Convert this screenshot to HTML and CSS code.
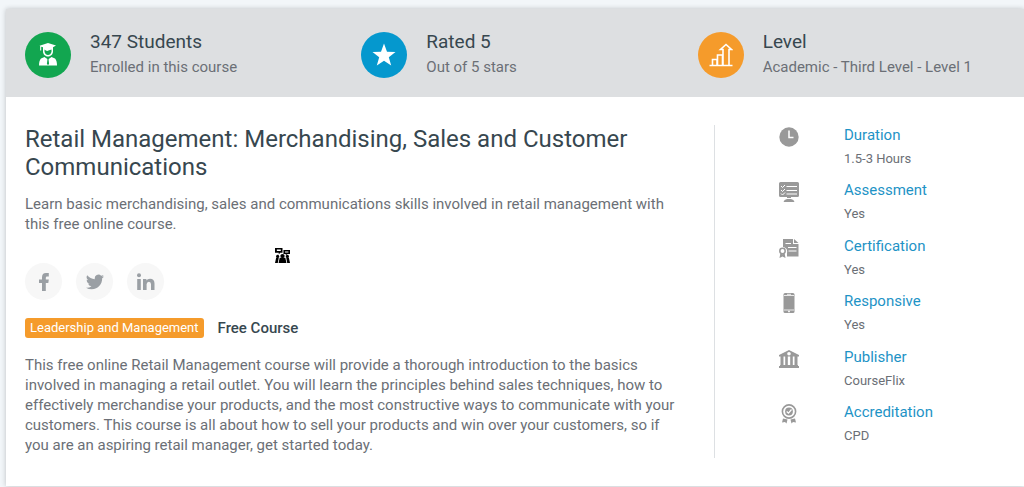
FILE: index.html
```html
<!DOCTYPE html>
<html lang="en">
<head>
<meta charset="utf-8">
<title>Retail Management: Merchandising, Sales and Customer Communications</title>
<link rel="stylesheet" href="styles.css">
</head>
<body>
<main class="card">
  <section class="stats">
    <div class="stat">
      <span class="stat-icon green">
        <svg width="22" height="24" viewBox="0 0 22 24" fill="#fff">
          <path d="M11 0 19 2.600 16 4.200V8.500C16 11 14 13.500 11 13.500S6 11 6 8.500V4.300L4.200 3.700V7.500H3.200V3.200L2.600 2.800Z"/>
          <path d="M7.500 6.500Q9.500 8.500 11.500 7.600 13 7 14.500 6.500V8.800Q13.500 12 11 12T7.500 8.800Z" fill="#12a650"/>
          <path d="M7.500 14 11 16.500 14.500 14 18 15.500Q20 17.500 20 22.500H2Q2 17.500 4 15.500Z"/>
          <path d="M10.500 16h1l.6 5-1.100 1-1.100-1Z" fill="#12a650"/>
        </svg>
      </span>
      <div>
        <h2 class="stat-title">347 Students</h2>
        <p class="stat-text">Enrolled in this course</p>
      </div>
    </div>
    <div class="stat">
      <span class="stat-icon blue">
        <svg width="24" height="24" viewBox="0 0 24 24" fill="#fff"><path d="M12 .5 15 8.700 23.500 9 16.800 14.200 19.200 22.500 12 17.700 4.800 22.500 7.200 14.200.5 9 9 8.700Z"/></svg>
      </span>
      <div>
        <h2 class="stat-title">Rated 5</h2>
        <p class="stat-text">Out of 5 stars</p>
      </div>
    </div>
    <div class="stat">
      <span class="stat-icon orange">
        <svg width="24" height="24" viewBox="0 0 24 24" fill="none" stroke="#fff" stroke-width="1.600"><path d="M.5 22.500H23.500M3.500 22V16.500H8V22M8.500 22V12H13.500V22M14 22V6.500H11.500L17 1.500 22.500 6.500H20V22"/></svg>
      </span>
      <div>
        <h2 class="stat-title">Level</h2>
        <p class="stat-text">Academic - Third Level - Level 1</p>
      </div>
    </div>
  </section>

  <div class="content">
    <article class="course">
      <h1 class="course-title">Retail Management: Merchandising, Sales and Customer Communications</h1>
      <p class="copy">Learn basic merchandising, sales and communications skills involved in retail management with this free online course.</p>
      <svg class="people" width="15" height="15" viewBox="0 0 16 16">
        <path d="M0 0h8v5H5.500L4 7V5H0ZM9 2h7v4.500h-3L11.500 8V6.500H9Z"/>
        <path d="M2 1.700h4.200v1.600H2ZM10.700 3.600h3.600v1.200h-3.600Z" fill="#fff"/>
        <circle cx="2.800" cy="9" r="1.700"/><circle cx="13.200" cy="9" r="1.700"/><circle cx="8" cy="8.600" r="2.300"/>
        <path d="M0 16 1.200 10.500H4L3 16ZM16 16 14.800 10.500H12L13 16ZM3.800 16 5 10.500H11L12.200 16Z"/>
      </svg>
      <nav class="social" aria-label="Share">
        <a href="#" aria-label="Facebook"><svg width="18" height="20" viewBox="0 0 18 20"><path d="M7 19V11H4V7.500H7V5.300Q7 1 11 1H13.800V4.500H12Q10.800 4.500 10.800 5.700V7.500H13.800L13.300 11H10.800V19Z"/></svg></a>
        <a href="#" aria-label="Twitter"><svg width="18" height="18" viewBox="0 0 24 24"><path d="M23.950 4.570a10 10 0 0 1-2.820.77 4.960 4.960 0 0 0 2.160-2.720c-.95.550-2 .950-3.130 1.180a4.920 4.920 0 0 0-8.380 4.480C7.690 8.100 4.070 6.130 1.640 3.160a4.920 4.920 0 0 0 1.520 6.570 4.900 4.900 0 0 1-2.230-.61v.06a4.920 4.920 0 0 0 3.950 4.830 5 5 0 0 1-2.210.08 4.940 4.940 0 0 0 4.600 3.420A9.870 9.870 0 0 1 0 19.540a14 14 0 0 0 7.550 2.210c9.050 0 14-7.500 14-13.980 0-.21 0-.42-.02-.63a9.940 9.940 0 0 0 2.420-2.570Z"/></svg></a>
        <a href="#" aria-label="LinkedIn"><svg width="20" height="18" viewBox="0 0 20 18"><circle cx="3" cy="2.300" r="2"/><path d="M1.200 6H4.800V17H1.200ZM7 6H10.400V7.500Q11.400 5.700 14 5.700 18.500 5.700 18.500 10.500V17H15V11.200Q15 8.700 12.900 8.700T10.600 11.200V17H7Z"/></svg></a>
      </nav>
      <div class="tags">
        <a class="tag" href="#">Leadership and Management</a>
        <strong class="price">Free Course</strong>
      </div>
      <p class="copy">This free online Retail Management course will provide a thorough introduction to the basics involved in managing a retail outlet. You will learn the principles behind sales techniques, how to effectively merchandise your products, and the most constructive ways to communicate with your customers. This course is all about how to sell your products and win over your customers, so if you are an aspiring retail manager, get started today.</p>
    </article>

    <aside class="facts">
      <div class="fact">
        <svg width="20" height="20" viewBox="0 0 20 20"><circle cx="10" cy="10" r="9.700"/><path class="line" d="M10 3.500V10.500H14.500" stroke-width="1.500"/></svg>
        <div><h3>Duration</h3><p>1.5-3 Hours</p></div>
      </div>
      <div class="fact">
        <svg width="20" height="20" viewBox="0 0 20 20"><path d="M1.500 0H18.500Q20 0 20 1.500V13.500Q20 15 18.500 15H12V17Q15 17.500 15.500 20H4.500Q5 17.500 8 17V15H1.500Q0 15 0 13.500V1.500Q0 0 1.500 0Z"/><path class="line" d="M7.500 4.500H18M7.500 8.500H18M7.500 12H18M2 4 3.500 5.500 6 3M2 8 3.500 9.500 6 7M2 11.500 3.500 13 6 10.500M4 16.500H16"/></svg>
        <div><h3>Assessment</h3><p>Yes</p></div>
      </div>
      <div class="fact">
        <svg width="20" height="20" viewBox="0 0 20 20"><path d="M4 1H14V6H19.500V18.500H8V15Q9 10 4 9ZM15 1 19.500 5H15Z"/><path class="line" d="M6.500 5.500H12M9 9.500H17.500M9.500 13H17.500"/><circle cx="3.500" cy="13" r="2.700" fill="#fff" stroke="#999" stroke-width="1.500"/><path d="M1.300 15.500 3.500 16.200 5.700 15.500 6.500 20 3.500 18.500.5 20Z"/></svg>
        <div><h3>Certification</h3><p>Yes</p></div>
      </div>
      <div class="fact">
        <svg width="20" height="20" viewBox="0 0 20 20"><rect x="4.500" y="0" width="11" height="20" rx="1.500"/><path class="line" d="M5 2.500H15M5 17H15M8 1.300H12" stroke-width=".8"/><circle cx="10" cy="18.400" r=".9" fill="#fff"/></svg>
        <div><h3>Responsive</h3><p>Yes</p></div>
      </div>
      <div class="fact">
        <svg width="20" height="20" viewBox="0 0 20 20"><path d="M10 1 20 6V7.500H0V6ZM1.500 7H4.500V16H1.500ZM6.200 7H8.800V16H6.200ZM11.200 7H13.800V16H11.200ZM15.500 7H18.500V16H15.500ZM1 16H19V17H20V19H0V17H1Z"/><circle cx="10" cy="4.800" r="1.800" fill="#fff"/></svg>
        <div><h3>Publisher</h3><p>CourseFlix</p></div>
      </div>
      <div class="fact">
        <svg width="20" height="20" viewBox="0 0 20 20"><circle cx="10" cy="7.500" r="6.600" fill="none" stroke="#999" stroke-width="1.600"/><circle cx="10" cy="7.500" r="3.900"/><path class="line" d="M7.700 7.500 9.500 9.200 12.500 5.500" stroke-width="1.200"/><path d="M4 14.500 8.500 15.500 7.500 19.500 6 18 3 18.500ZM16 14.500 11.500 15.500 12.500 19.500 14 18 17 18.500Z"/></svg>
        <div><h3>Accreditation</h3><p>CPD</p></div>
      </div>
    </aside>
  </div>
</main>
</body>
</html>
```
FILE: styles.css
```css
* { box-sizing: border-box; }
body {
  margin: 0;
  padding: 9px 0 1px 6px;
  background: #f2f6f9;
  color: #6b6f76;
  font: 15px/20px Roboto, "Liberation Sans", sans-serif;
  overflow-x: hidden;
}
h1, h2, h3, p { margin: 0; font-weight: 400; }
svg { display: block; flex: none; }
a { color: inherit; text-decoration: none; }

.card {
  background: #fff;
  box-shadow: 0 0 5px rgba(0, 0, 0, .22);
}

.stats {
  display: grid;
  grid-template-columns: repeat(3, 1fr);
  padding: 19px 0 18px 19px;
  margin-right: -10px;
  background: #dddfe1;
}
.stat { display: flex; align-items: center; gap: 19px; }
.stat-icon {
  display: flex;
  align-items: center;
  justify-content: center;
  flex: none;
  width: 46px;
  height: 46px;
  margin-top: 2px;
  border-radius: 50%;
}
.green { background: #12a650; }
.blue { background: #0598ce; }
.orange { background: #f59b2b; }
.stat-title { color: #37474f; font-size: 19px; line-height: 27px; }
.stat-text { line-height: 24px; }

.content {
  display: grid;
  grid-template-columns: 69fr 29fr;
  padding: 28px 19px;
}
.course {
  position: relative;
  padding: 0 34px 3px 0;
  border-right: 1px solid #dde0e3;
}
.course-title {
  margin-bottom: 13px;
  color: #37474f;
  font-size: 24px;
  line-height: 28px;
}
.people { position: absolute; left: 250px; top: 123px; }
.social { display: flex; gap: 14px; margin: 29px 0 18px; }
.social a {
  display: flex;
  align-items: center;
  justify-content: center;
  width: 37px;
  height: 37px;
  border-radius: 50%;
  background: #f7f7f7;
  fill: #9a9fa4;
}
.tags { display: flex; align-items: center; gap: 14px; margin-bottom: 17px; }
.tag {
  padding: 0 5px;
  border-radius: 3px;
  background: #f59b2b;
  color: #fff;
  font-size: 13px;
}
.price { color: #37474f; font-weight: 500; }

.facts {
  display: flex;
  flex-direction: column;
  justify-content: space-between;
  padding: 0 0 8px 64px;
}
.fact { display: flex; gap: 45px; fill: #999; }
.fact svg { margin-top: 2px; }
.fact .line { fill: none; stroke: #fff; }
.fact h3 { color: #1e93c6; font-size: 15px; line-height: 20px; }
.fact p { font-size: 13px; line-height: 28px; }
```
